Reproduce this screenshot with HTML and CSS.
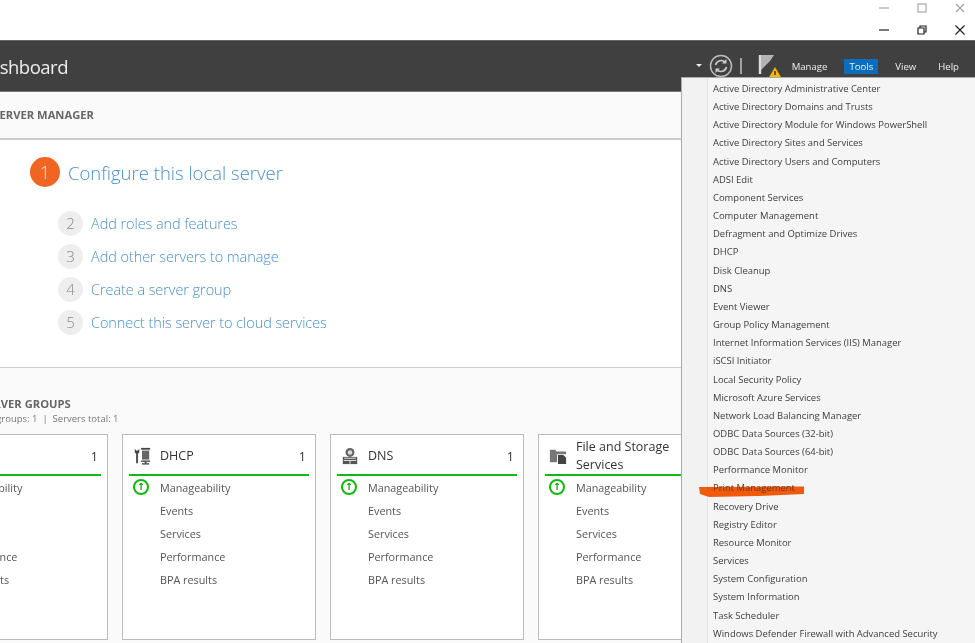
FILE: index.html
```html
<!DOCTYPE html>
<html lang="en">
<head>
<meta charset="utf-8">
<title>Server Manager</title>
<link rel="stylesheet" href="styles.css">
</head>
<body>
<div class="page">
  <div class="chrome">
    <div class="winrow faded">
      <svg class="wc" viewBox="0 0 12 12"><path d="M1 6h10"/></svg>
      <svg class="wc" viewBox="0 0 12 12"><rect x="2" y="2" width="8" height="8"/></svg>
      <svg class="wc" viewBox="0 0 12 12"><path d="M2 2l8 8M10 2l-8 8"/></svg>
    </div>
    <div class="winrow">
      <svg class="wc" viewBox="0 0 12 12"><path d="M1 6h10"/></svg>
      <svg class="wc" viewBox="0 0 12 12"><path d="M2 4h6v6H2zM4 4V2h6v6H8"/></svg>
      <svg class="wc" viewBox="0 0 12 12"><path d="M1.500 1.500l9 9M10.500 1.500l-9 9"/></svg>
    </div>
  </div>
  <header class="header">
    <div class="title">Dashboard</div>
    <div class="tools">
      <svg class="tool-icons" width="90" height="34" viewBox="0 0 90 34">
        <path d="M4 15h6l-3 3z" fill="#eee"/>
        <circle cx="29" cy="17" r="10.500" fill="none" stroke="#bbb" stroke-width="1.500"/>
        <path d="M23.500 16a5.800 5.800 0 0 1 10-2.500M34.500 18a5.800 5.800 0 0 1-10 2.500" fill="none" stroke="#ccc" stroke-width="1.700"/>
        <path d="M34.500 10v4.500H30zM23.500 24v-4.500H28z" fill="#ccc"/>
        <path d="M49 9v16" stroke="#ccc" stroke-width="1.400"/>
        <path d="M68 6v19" stroke="#ddd" stroke-width="2.400"/>
        <path d="M69 6h13l-4 6-9 9z" fill="#b4b4b4"/>
        <path d="M83 18l6.500 11h-13z" fill="#f5b800"/>
        <path d="M83 22v4" stroke="#333" stroke-width="1.500"/>
      </svg>
      <nav class="menu-bar">
        <span class="nav">Manage</span>
        <span class="nav active">Tools</span>
        <span class="nav">View</span>
        <span class="nav">Help</span>
      </nav>
    </div>
  </header>
  <main class="main">
    <div class="crumb">WELCOME TO SERVER MANAGER</div>
    <section class="welcome">
      <div class="step first"><span class="num">1</span><a>Configure this local server</a></div>
      <div class="step"><span class="num">2</span><a>Add roles and features</a></div>
      <div class="step"><span class="num">3</span><a>Add other servers to manage</a></div>
      <div class="step"><span class="num">4</span><a>Create a server group</a></div>
      <div class="step"><span class="num">5</span><a>Connect this server to cloud services</a></div>
    </section>
    <section class="groups">
      <h2>SERVER GROUPS</h2>
      <p class="sub">Roles: 3 &nbsp;|&nbsp; Server groups: 1 &nbsp;|&nbsp; Servers total: 1</p>
      <div class="cards">
        <article class="card">
          <div class="card-head"><span class="card-title">AD DS</span><span class="count">1</span></div>
          <ul><li class="ok">Manageability</li><li>Events</li><li>Services</li><li>Performance</li><li>BPA results</li></ul>
        </article>
        <article class="card">
          <div class="card-head">
            <svg class="role" viewBox="0 0 20 20"><path d="M2 2v4l1.500 1.500V18h2V7.500L7 6V2L5.500 4h-2z" fill="#444"/><rect x="9" y="1" width="10" height="2" fill="#444"/><rect x="10" y="4" width="8" height="10" fill="#666"/><rect x="9" y="15" width="10" height="1.500" fill="#444"/><rect x="13" y="16" width="2" height="2" fill="#444"/><rect x="10" y="18" width="8" height="1.500" fill="#444"/></svg>
            <span class="card-title">DHCP</span><span class="count">1</span>
          </div>
          <ul><li class="ok">Manageability</li><li>Events</li><li>Services</li><li>Performance</li><li>BPA results</li></ul>
        </article>
        <article class="card">
          <div class="card-head">
            <svg class="role" viewBox="0 0 20 20"><circle cx="10" cy="6" r="5" fill="#666"/><circle cx="10" cy="6" r="2.500" fill="#ddd"/><path d="M2 11h16v8H2z" fill="#555"/><path d="M3 15h14M10 15v4M3.500 12.500h13" stroke="#eee" stroke-width="1"/></svg>
            <span class="card-title">DNS</span><span class="count">1</span>
          </div>
          <ul><li class="ok">Manageability</li><li>Events</li><li>Services</li><li>Performance</li><li>BPA results</li></ul>
        </article>
        <article class="card">
          <div class="card-head">
            <svg class="role" viewBox="0 0 20 20"><path d="M1 3h6l1.500 2H19v3H9v9H1z" fill="#777"/><path d="M10 9h6l3 3v7h-9z" fill="#444"/></svg>
            <span class="card-title">File and Storage Services</span><span class="count">1</span>
          </div>
          <ul><li class="ok">Manageability</li><li>Events</li><li>Services</li><li>Performance</li><li>BPA results</li></ul>
        </article>
      </div>
    </section>
  </main>
  <div class="dropdown">
    <div class="item">Active Directory Administrative Center</div>
    <div class="item">Active Directory Domains and Trusts</div>
    <div class="item">Active Directory Module for Windows PowerShell</div>
    <div class="item">Active Directory Sites and Services</div>
    <div class="item">Active Directory Users and Computers</div>
    <div class="item">ADSI Edit</div>
    <div class="item">Component Services</div>
    <div class="item">Computer Management</div>
    <div class="item">Defragment and Optimize Drives</div>
    <div class="item">DHCP</div>
    <div class="item">Disk Cleanup</div>
    <div class="item">DNS</div>
    <div class="item">Event Viewer</div>
    <div class="item">Group Policy Management</div>
    <div class="item">Internet Information Services (IIS) Manager</div>
    <div class="item">iSCSI Initiator</div>
    <div class="item">Local Security Policy</div>
    <div class="item">Microsoft Azure Services</div>
    <div class="item">Network Load Balancing Manager</div>
    <div class="item">ODBC Data Sources (32-bit)</div>
    <div class="item">ODBC Data Sources (64-bit)</div>
    <div class="item">Performance Monitor</div>
    <div class="item marked"><svg class="scribble" viewBox="0 0 105 12" preserveAspectRatio="none"><path d="M0 2L105 1.500V9L60 11 10 12 1 9z" fill="#f15a0c"/></svg><span>Print Management</span></div>
    <div class="item">Recovery Drive</div>
    <div class="item">Registry Editor</div>
    <div class="item">Resource Monitor</div>
    <div class="item">Services</div>
    <div class="item">System Configuration</div>
    <div class="item">System Information</div>
    <div class="item">Task Scheduler</div>
    <div class="item">Windows Defender Firewall with Advanced Security</div>
  </div>
</div>
</body>
</html>
```
FILE: styles.css
```css
html, body { margin: 0; padding: 0; }
body { background: #fff; }
.page {
  position: relative;
  width: 975px;
  height: 643px;
  overflow: hidden;
  font-family: "Open Sans", "Noto Sans", sans-serif;
  color: #444;
  background: #fff;
  filter: blur(0.35px);
}
.chrome { height: 40px; display: flex; flex-direction: column; padding-right: 9px; box-sizing: border-box; }
.winrow { height: 20px; display: flex; justify-content: flex-end; align-items: center; gap: 26px; }
.winrow.faded { height: 16px; margin-bottom: 4px; opacity: .4; }
.wc { width: 12px; height: 12px; fill: none; stroke: #222; stroke-width: 1.2; }
.header {
  height: 52px;
  background: #404040;
  border-top: 1px solid #666;
  border-bottom: 1px solid #777;
  box-sizing: border-box;
  display: flex;
  justify-content: space-between;
  align-items: center;
  overflow: hidden;
}
.title { font-size: 18.500px; letter-spacing: -.5px; color: #eee; margin-left: -23px; }
.tools { display: flex; align-items: center; margin-right: 11px; }
.tool-icons { margin-right: 5px; }
.menu-bar { display: flex; align-items: center; gap: 12px; margin-top: 1px; }
.nav { font-size: 9.600px; color: #eee; padding: 1px 5px; line-height: 13px; }
.nav.active { background: #0a6ebd; color: #e8f2fa; }
.main { height: 551px; background: #fafafa; overflow: hidden; }
.crumb {
  height: 48px;
  box-sizing: border-box;
  border-bottom: 2px solid #ccc;
  font-size: 11.200px;
  font-weight: 700;
  color: #666;
  line-height: 46px;
  margin-left: -84px;
  white-space: nowrap;
}
.welcome {
  height: 228px;
  box-sizing: border-box;
  background: #fff;
  border-bottom: 1px solid #ccc;
  padding: 17px 0 0 58px;
  display: flex;
  flex-direction: column;
  gap: 8px;
}
.step { height: 25px; display: flex; align-items: center; gap: 8px; font-size: 14.500px; font-weight: 300; letter-spacing: -.07px; color: #4a8fc9; }
.step .num {
  width: 25px; height: 25px; border-radius: 50%;
  background: #eee; color: #888;
  display: flex; align-items: center; justify-content: center;
  font-size: 15px;
}
.step.first { height: 30px; margin: 0 0 15.500px -28px; font-size: 18.500px; letter-spacing: 0; }
.step.first .num { width: 30px; height: 30px; background: #f16522; color: #fde; font-size: 18px; }
.groups { padding-top: 28px; }
.groups h2 { margin: 0 0 0 -19px; font-size: 11.200px; font-weight: 700; color: #666; line-height: 16px; white-space: nowrap; }
.sub { margin: 0 0 0 -84px; font-size: 9.500px; line-height: 14px; color: #777; white-space: pre; height: 14px; }
.cards { display: flex; gap: 14px; margin: 8px 0 0 -86px; }
.card {
  flex: none;
  width: 194px;
  height: 206px;
  box-sizing: border-box;
  background: #fff;
  border: 1px solid #bbb;
  padding: 0 6px;
}
.card-head {
  height: 40.500px;
  box-sizing: border-box;
  border-bottom: 2.500px solid #14b814;
  display: flex;
  align-items: center;
  padding: 4px 3px 0 4px;
  font-size: 12.500px;
  color: #333;
}
.role { width: 18px; height: 18px; flex: none; margin-right: 9px; }
.card-title { flex: 1; line-height: 18px; }
.count { font-size: 12.500px; }
.card ul { list-style: none; margin: 0; padding: 0 0 0 31px; }
.card li { position: relative; height: 23px; line-height: 23px; font-size: 10.800px; color: #555; }
.card li.ok::before {
  content: "↑";
  position: absolute;
  left: -27px;
  top: 3px;
  width: 12px;
  height: 12px;
  border: 2px solid #14b814;
  border-radius: 50%;
  color: #14a014;
  font: bold 10px/12px "DejaVu Sans", sans-serif;
  text-align: center;
}
.dropdown {
  position: absolute;
  left: 681px;
  top: 77px;
  width: 294px;
  height: 566px;
  box-sizing: border-box;
  background: linear-gradient(to right, #f2f2f2 25px, #e4e4e4 25px, #e4e4e4 26px, #f5f5f5 26px);
  border-left: 1px solid #aaa;
  border-top: 1px solid #aaa;
  padding: 2px 0 0 31px;
}
.item { position: relative; height: 18.170px; line-height: 18.170px; font-size: 9.450px; color: #3c3c3c; white-space: nowrap; }
.item span { position: relative; color: #6a3810; }
.scribble { position: absolute; left: -14px; top: 6px; width: 105px; height: 12px; }
```
